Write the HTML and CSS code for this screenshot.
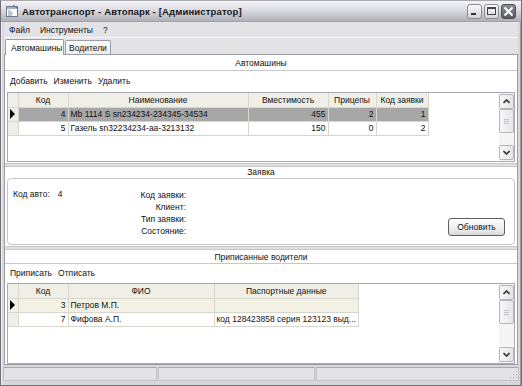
FILE: index.html
```html
<!DOCTYPE html>
<html>
<head>
<meta charset="utf-8">
<link rel="stylesheet" href="styles.css">
</head>
<body>
<div class="window">
  <div class="titlebar">
    <svg class="appicon" width="14" height="14" viewBox="0 0 14 14">
      <rect x="1.5" y="2.5" width="11" height="10" fill="#fff" stroke="#6b7a8c"/>
      <rect x="2" y="3" width="10" height="2" fill="#9fb4cc"/>
      <path d="M3 7h3M3 9h5M3 11h4" stroke="#7d8b9b"/>
      <path d="M8 1l4 3" stroke="#8a6a30"/>
    </svg>
    <span class="title">Автотранспорт - Автопарк - [Администратор]</span>
    <div class="tbtns">
      <div class="tbtn"><span class="minbar"></span></div>
      <div class="tbtn"><span class="maxbox"></span></div>
      <div class="tbtn close">
        <svg width="11" height="11" viewBox="0 0 11 11"><path d="M1.5 1.5l8 8M9.5 1.5l-8 8" stroke="#fff" stroke-width="2"/></svg>
      </div>
    </div>
  </div>
  <div class="menubar">
    <span>Файл</span><span>Инструменты</span><span>?</span>
  </div>
  <div class="tabstrip">
    <div class="tab active">Автомашины</div>
    <div class="tab">Водители</div>
  </div>
  <div class="page">
    <div class="section s1">
      <div class="caption">Автомашины</div>
      <div class="toolbar"><span>Добавить</span><span>Изменить</span><span>Удалить</span></div>
      <div class="grid g1">
        <table>
          <tr class="hdr"><td class="rh"></td><td class="c-kod">Код</td><td class="c-name">Наименование</td><td class="c-cap">Вместимость</td><td class="c-pr">Прицепы</td><td class="c-zk">Код заявки</td></tr>
          <tr class="sel"><td class="rh"><span class="arrow"></span></td><td class="num">4</td><td>Mb 1114 S sn234234-234345-34534</td><td class="num">455</td><td class="num">2</td><td class="num">1</td></tr>
          <tr><td class="rh"></td><td class="num">5</td><td>Газель sn32234234-aa-3213132</td><td class="num">150</td><td class="num">0</td><td class="num">2</td></tr>
        </table>
        <div class="vscroll">
          <div class="sbtn"><svg width="7" height="5" viewBox="0 0 7 5"><path d="M0.5 4l3-3 3 3" fill="none" stroke="#333" stroke-width="1.6"/></svg></div>
          <div class="thumb"><span></span><span></span><span></span></div>
          <div class="track"></div>
          <div class="sbtn"><svg width="7" height="5" viewBox="0 0 7 5"><path d="M0.5 1l3 3 3-3" fill="none" stroke="#333" stroke-width="1.6"/></svg></div>
        </div>
      </div>
    </div>
    <div class="splitter"></div>
    <div class="section s2">
      <div class="caption">Заявка</div>
      <div class="groupbox">
        <div class="gcol1"><span class="lbl">Код авто:</span><span class="val">4</span></div>
        <div class="gcol2">
          <span>Код заявки:</span>
          <span>Клиент:</span>
          <span>Тип заявки:</span>
          <span>Состояние:</span>
        </div>
        <div class="gspacer"></div>
        <div class="btn">Обновить</div>
      </div>
    </div>
    <div class="splitter"></div>
    <div class="section s3">
      <div class="caption">Приписанные водители</div>
      <div class="toolbar"><span>Приписать</span><span>Отписать</span></div>
      <div class="grid g2">
        <table>
          <tr class="hdr"><td class="rh"></td><td class="c-kod">Код</td><td class="c-fio">ФИО</td><td class="c-pas">Паспортные данные</td></tr>
          <tr class="sel2"><td class="rh"><span class="arrow"></span></td><td class="num">3</td><td>Петров М.П.</td><td></td></tr>
          <tr><td class="rh"></td><td class="num">7</td><td>Фифова А.П.</td><td>код 128423858 серия 123123 выд...</td></tr>
        </table>
        <div class="vscroll">
          <div class="sbtn"><svg width="7" height="5" viewBox="0 0 7 5"><path d="M0.5 4l3-3 3 3" fill="none" stroke="#333" stroke-width="1.6"/></svg></div>
          <div class="thumb"><span></span><span></span><span></span></div>
          <div class="track"></div>
          <div class="sbtn"><svg width="7" height="5" viewBox="0 0 7 5"><path d="M0.5 1l3 3 3-3" fill="none" stroke="#333" stroke-width="1.6"/></svg></div>
        </div>
      </div>
    </div>
  </div>
  <div class="statusbar">
    <div class="sp sp1"></div>
    <div class="sp sp2"></div>
    <div class="sp sp3"><svg class="grip" width="10" height="10" viewBox="0 0 10 10"><g fill="#aaa"><rect x="8" y="2" width="1" height="1"/><rect x="5" y="5" width="1" height="1"/><rect x="8" y="5" width="1" height="1"/><rect x="2" y="8" width="1" height="1"/><rect x="5" y="8" width="1" height="1"/><rect x="8" y="8" width="1" height="1"/></g></svg></div>
  </div>
</div>
</body>
</html>
```
FILE: styles.css
```css
* { box-sizing: border-box; }
html, body { margin: 0; padding: 0; }
body { width: 522px; height: 386px; overflow: hidden; background: #fff; font-family: "Liberation Sans", Arial, sans-serif; font-size: 8.5px; color: #111; }

.window {
  width: 522px; height: 386px;
  display: flex; flex-direction: column;
  background: #d8d8dc;
  border: 1px solid #6e6e74;
  border-top-color: #a8a8b0;
  padding: 0 3px 4px 3px;
  box-shadow: inset 1px 0 0 #f2f2f4, inset -1px 0 0 #9a9aa0;
}

.titlebar {
  height: 21px; margin: 0 -3px;
  display: flex; align-items: center;
  padding: 0 5px 0 4px;
  background: linear-gradient(#f4f4f6 0%, #e2e2e8 35%, #c4c4cc 75%, #b0b0ba 100%);
  border-bottom: 1px solid #a2a2aa;
}
.appicon { flex: none; margin-right: 3px; }
.title { font-family: "Liberation Sans", Arial, sans-serif; font-weight: bold; font-size: 9.6px; color: #1a1a1a; letter-spacing: 0.1px; }
.tbtns { margin-left: auto; display: flex; gap: 2px; }
.tbtn { width: 15px; height: 15px; border: 1px solid #8a8a92; border-radius: 3px; background: linear-gradient(#fafafa, #d4d4da); display: flex; align-items: center; justify-content: center; position: relative; }
.minbar { width: 5px; height: 2px; background: #333; margin-top: 6px; margin-right: 2px; }
.maxbox { width: 9px; height: 8px; border: 1px solid #444; border-top-width: 2px; }
.tbtn.close { background: linear-gradient(#8c8c94, #5a5a62); border-color: #4e4e56; }

.menubar { height: 16px; display: flex; align-items: center; gap: 10px; padding-left: 5px; background: #e3e3e6; border-bottom: 1px solid #fbf8ec; }
.tabstrip { height: 16px; display: flex; align-items: flex-end; background: #e3e3e6; padding-left: 1px; }
.tab { height: 14px; padding: 0 3px; display: flex; align-items: center; border: 1px solid #9c9ca4; border-bottom: none; border-radius: 2px 2px 0 0; background: linear-gradient(#fcfcfc, #ececec); margin-right: 1px; }
.tab.active { height: 16px; background: #fff; padding: 0 5px 0 5px; width: 59px; position: relative; top: 1px; border-color: #9c9ca4; }

.page { flex: 1; display: flex; flex-direction: column; background: #fff; border: 1px solid #9c9ca4; }
.section { display: flex; flex-direction: column; }
.s1 { height: 108px; }
.s2 { height: 79px; }
.s3 { flex: 1; }
.splitter { height: 4px; background: #e0e0e3; border-top: 1px solid #c8c8cc; border-bottom: 1px solid #c8c8cc; }
.caption { height: 16px; display: flex; align-items: center; justify-content: center; border-bottom: 1px solid #c7c7cb; }
.s2 .caption { height: 11px; border-bottom: none; }
.s3 .caption { height: 14px; }
.toolbar { height: 19px; display: flex; align-items: center; gap: 6px; padding-left: 5px; }
.s3 .toolbar { height: 18px; }

.grid { margin: 0 2px 0 2px; border: 1px solid #a9a9b0; display: flex; background: #fff; flex: 1; }
.g1 { margin-top: 2px; margin-bottom: 1px; }
.g2 { margin-top: 1px; margin-bottom: 0; }
table { border-collapse: collapse; align-self: flex-start; font-size: 8.5px; table-layout: fixed; }
td { height: 14px; padding: 0 2px; border: 1px solid #d6d6ce; white-space: nowrap; line-height: 12px; overflow: hidden; }
tr.hdr td { background: #f0efe7; text-align: center; border-color: #d8d7cd; border-top: none; }
td.rh { width: 10px; padding: 0; background: #f0efe7; border-left: none; }
td.num { text-align: right; }
.c-kod { width: 50px; }
.c-name { width: 180px; }
.c-cap { width: 80px; }
.c-pr { width: 48px; }
.c-zk { width: 52px; }
.c-fio { width: 146px; }
.c-pas { width: 144px; }
tr.sel td { background: #a7a7a7; }
tr.sel td.rh { background: #f0efe7; }
tr.sel2 td { background: #f3f1e4; }
.arrow { display: block; width: 0; height: 0; margin-left: 2px; border-left: 5px solid #000; border-top: 5px solid transparent; border-bottom: 5px solid transparent; }

.vscroll { margin-left: auto; width: 15px; display: flex; flex-direction: column; background: #f5f5f3; padding: 1px 0; }
.sbtn { height: 15px; border: 1px solid #b5b5bd; border-radius: 2px; background: linear-gradient(90deg, #f8f8fa, #e2e2e8); display: flex; align-items: center; justify-content: center; }
.thumb { height: 24px; border: 1px solid #b5b5bd; border-radius: 2px; background: linear-gradient(90deg, #f8f8fa, #e4e4ea); display: flex; flex-direction: column; align-items: center; justify-content: center; gap: 1px; }
.thumb span { width: 5px; height: 1px; background: #c2c2c8; }
.track { flex: 1; }

.groupbox { margin: 1px 2px 1px 2px; flex: 1; border: 1px solid #c6c6c8; border-radius: 4px; display: flex; padding: 10px 9px 7px 5px; }
.gcol1 { display: flex; gap: 8px; width: 100px; }
.gcol2 { display: flex; flex-direction: column; align-items: flex-end; width: 73px; line-height: 12px; }
.gspacer { flex: 1; }
.btn { align-self: flex-end; width: 57px; height: 18px; margin-bottom: 1px; border: 1px solid #5e5e66; border-radius: 3px; background: linear-gradient(#ffffff, #ececec 70%, #d6d6d6); display: flex; align-items: center; justify-content: center; }

.statusbar { height: 15px; display: flex; margin: 1px -1px 0 -1px; padding-top: 1px; }
.sp { border: 1px solid #c0c0c4; border-top-color: #a8a8ae; background: #e3e3e6; height: 14px; }
.sp1 { width: 154px; }
.sp2 { width: 157px; margin-left: 1px; }
.sp3 { flex: 1; margin-left: 1px; position: relative; }
.grip { position: absolute; right: 0; bottom: 1px; }
```
